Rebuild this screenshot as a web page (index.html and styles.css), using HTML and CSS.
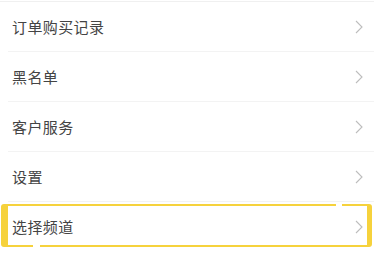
FILE: index.html
```html
<!DOCTYPE html>
<html lang="zh">
<head>
<meta charset="utf-8">
<link rel="stylesheet" href="styles.css">
</head>
<body>
<ul class="menu">
  <li class="item"><span class="label">订单购买记录</span><svg class="chev" viewBox="0 0 8 14" width="8" height="14"><polyline points="1,1 7,7 1,13"/></svg></li>
  <li class="item"><span class="label">黑名单</span><svg class="chev" viewBox="0 0 8 14" width="8" height="14"><polyline points="1,1 7,7 1,13"/></svg></li>
  <li class="item"><span class="label">客户服务</span><svg class="chev" viewBox="0 0 8 14" width="8" height="14"><polyline points="1,1 7,7 1,13"/></svg></li>
  <li class="item"><span class="label">设置</span><svg class="chev" viewBox="0 0 8 14" width="8" height="14"><polyline points="1,1 7,7 1,13"/></svg></li>
  <li class="item item-hl"><span class="label">选择频道</span><svg class="chev" viewBox="0 0 8 14" width="8" height="14"><polyline points="1,1 7,7 1,13"/></svg><span class="hl"></span></li>
</ul>
</body>
</html>
```
FILE: styles.css
```css
html, body {
  margin: 0;
  padding: 0;
  background: #ffffff;
}
body {
  width: 374px;
  height: 265px;
  overflow: hidden;
  font-family: "Noto Sans CJK SC", "Noto Sans", sans-serif;
}
.menu {
  list-style: none;
  margin: 1px 0 0 0;
  padding: 0;
  border-top: 1px solid #f0f0f0;
}
.item {
  position: relative;
  display: flex;
  align-items: center;
  justify-content: space-between;
  padding: 0 11px 0 12px;
  box-sizing: border-box;
  height: 50px;
  background-image: linear-gradient(#f3f3f3, #f3f3f3);
  background-repeat: no-repeat;
  background-position: 8px 100%;
  background-size: 100% 1px;
}
.item-hl {
  background-image: none;
}
.label {
  font-size: 15px;
  color: #444444;
  letter-spacing: 0.4px;
  margin-bottom: 2px;
}
.chev {
  fill: none;
  stroke: #bdbdbd;
  stroke-width: 1.1;
}
.hl {
  position: absolute;
  left: 1px;
  right: 2px;
  top: 2px;
  bottom: 5px;
  border-style: solid;
  border-color: #f6d23c;
  border-width: 2px 5px 2px 7px;
  border-radius: 3px;
}
.hl::before,
.hl::after {
  content: "";
  position: absolute;
  background: #ffffff;
  height: 3px;
}
.hl::before {
  top: -2px;
  left: 328px;
  width: 6px;
}
.hl::after {
  bottom: -2px;
  left: 25px;
  width: 7px;
}
```
